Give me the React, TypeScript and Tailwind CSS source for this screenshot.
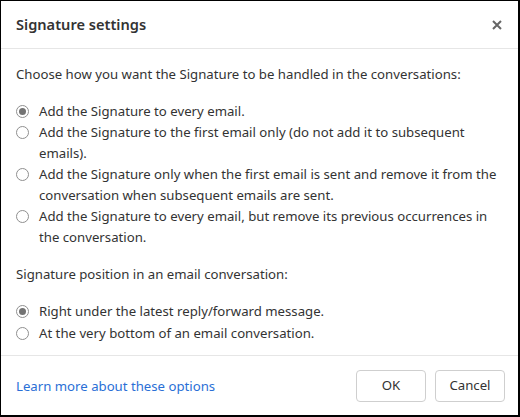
const font = { fontFamily: '"Segoe UI", "Noto Sans", "Open Sans", sans-serif' };

function Radio({ checked }: { checked?: boolean }) {
  return (
    <span className="mt-[4px] flex h-[13px] w-[13px] shrink-0 items-center justify-center rounded-full border border-[#8f8f8f] bg-white">
      {checked && <span className="h-[7px] w-[7px] rounded-full bg-[#737373]" />}
    </span>
  );
}

function Option({ label, checked }: { label: string; checked?: boolean }) {
  return (
    <label className="flex items-start gap-[10px]">
      <Radio checked={checked} />
      <span>{label}</span>
    </label>
  );
}

const handling = [
  'Add the Signature to every email.',
  'Add the Signature to the first email only (do not add it to subsequent emails).',
  'Add the Signature only when the first email is sent and remove it from the conversation when subsequent emails are sent.',
  'Add the Signature to every email, but remove its previous occurrences in the conversation.',
];

const position = [
  'Right under the latest reply/forward message.',
  'At the very bottom of an email conversation.',
];

export default function App() {
  return (
    <div
      className="flex h-[417px] w-[520px] flex-col border-t border-l border-r-2 border-b-2 border-black bg-white text-[13.2px] leading-[21px] text-[#333]"
      style={font}
    >
      <div className="flex h-[48px] items-center justify-between border-b border-[#e6e6e6] pl-[15px] pr-[16px]">
        <h1 className="text-[14.6px] font-semibold text-[#333]">Signature settings</h1>
        <button className="text-[#666]" aria-label="Close">
          <svg width="10" height="10" viewBox="0 0 10 10">
            <path d="M1 1L9 9M9 1L1 9" stroke="currentColor" strokeWidth="2" />
          </svg>
        </button>
      </div>

      <div className="flex-1 pl-[15px] pr-[14px] pt-[15px]">
        <p>Choose how you want the Signature to be handled in the conversations:</p>
        <div className="mt-[16px]">
          {handling.map((t, i) => (
            <Option key={t} label={t} checked={i === 0} />
          ))}
        </div>
        <p className="mt-[16px]">Signature position in an email conversation:</p>
        <div className="mt-[16px] space-y-[1px]">
          {position.map((t, i) => (
            <Option key={t} label={t} checked={i === 0} />
          ))}
        </div>
      </div>

      <div className="flex h-[60px] items-center justify-between border-t border-[#e6e6e6] pl-[15px] pr-[13px]">
        <a href="#" className="pt-[2px] text-[#2a6fd6]">Learn more about these options</a>
        <div className="flex gap-[9px]">
          <button className="h-[32px] w-[70px] rounded-[4px] border border-[#cfcfcf] bg-white text-[#333]">OK</button>
          <button className="h-[32px] w-[70px] rounded-[4px] border border-[#cfcfcf] bg-white text-[#333]">Cancel</button>
        </div>
      </div>
    </div>
  );
}
